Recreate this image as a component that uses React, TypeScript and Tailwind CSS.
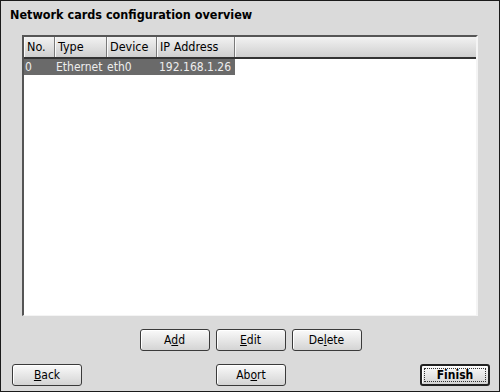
import React from "react";

const font = { fontFamily: '"DejaVu Sans Condensed", "DejaVu Sans", sans-serif', fontStretch: "condensed" as const };

function Btn({ children, primary }: { children: React.ReactNode; primary?: boolean }) {
  return (
    <button
      className={
        "flex h-[22px] w-[70px] items-center justify-center rounded-[3px] border border-[#3a3a3a] bg-gradient-to-b from-[#fafafa] to-[#d4d4d4] p-[2px] text-[12px] text-black shadow-[inset_1px_1px_0_#ffffff]" +
        (primary ? " border-2 border-[#222]" : "")
      }
    >
      <span
        className={
          "flex h-full w-full items-center justify-center leading-none" +
          (primary ? " border border-dotted border-[#333] font-bold" : "")
        }
      >
        {children}
      </span>
    </button>
  );
}

const cols = [
  { label: "No.", w: "w-[31px]" },
  { label: "Type", w: "w-[52px]" },
  { label: "Device", w: "w-[50px]" },
  { label: "IP Address", w: "w-[78px]" },
];

export default function App() {
  return (
    <div style={font} className="flex h-[392px] w-[500px] flex-col border border-[#1a1a1a] bg-[#dadada] text-black">
      <h1 className="pl-[9px] pt-[6px] text-[12.5px] font-bold leading-[16px]">Network cards configuration overview</h1>

      <div className="ml-[21px] mt-[12px] flex h-[281px] w-[456px] flex-col border-l-2 border-t-2 border-b border-r-2 border-l-[#555] border-t-[#555] border-b-[#f4f4f4] border-r-[#f4f4f4] bg-white">
        <div className="flex h-[22px] border-b-2 border-[#333] bg-gradient-to-b from-[#f2f2f2] to-[#cfcfcf] text-[12.5px]">
          {cols.map((c) => (
            <div key={c.label} className={`${c.w} flex items-center border-r border-[#7a7a7a] pl-[3px] shadow-[inset_1px_0_0_#fafafa]`}>
              {c.label}
            </div>
          ))}
          <div className="flex-1 shadow-[inset_1px_0_0_#fafafa]" />
        </div>
        <div className="flex h-[16px] w-[211px] items-center whitespace-nowrap bg-[#6a6a6a] text-[12px] text-[#ededed]">
          <div className="w-[31px] pl-[1px]">0</div>
          <div className="w-[52px] pl-[1px]">Ethernet</div>
          <div className="w-[50px]">eth0</div>
          <div className="w-[78px] pl-[2px]">192.168.1.26</div>
        </div>
      </div>

      <div className="mt-[13px] flex justify-center gap-[6px] pl-[1px]">
        <Btn>
          A<u>d</u>d
        </Btn>
        <Btn>
          <u>E</u>dit
        </Btn>
        <Btn>
          De<u>l</u>ete
        </Btn>
      </div>

      <div className="mt-[13px] flex items-center justify-between pl-[11px] pr-[9px]">
        <Btn>
          <u>B</u>ack
        </Btn>
        <Btn>
          Ab<u>o</u>rt
        </Btn>
        <Btn primary>Finish</Btn>
      </div>
    </div>
  );
}
